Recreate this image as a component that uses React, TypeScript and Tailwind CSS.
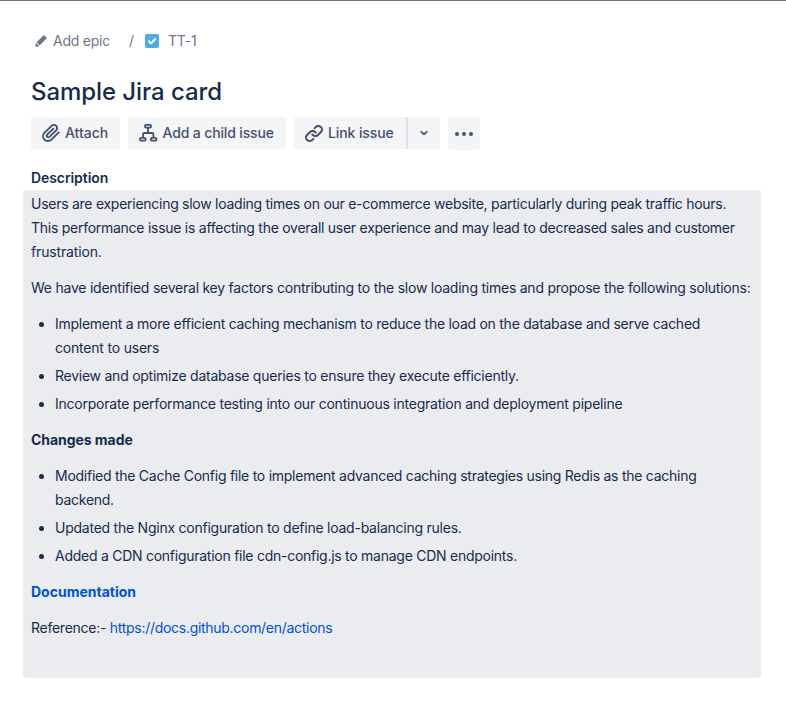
import React from "react";

const AttachIcon = () => (
  <svg width="24" height="24" viewBox="0 0 24 24" className="shrink-0" fill="currentColor">
    <path d="M11.643 17.965c-1.53 1.495-4.016 1.496-5.542.004a3.773 3.773 0 01.002-5.412l7.147-6.985a2.316 2.316 0 013.233-.003c.893.873.895 2.282.004 3.153l-6.703 6.55a.653.653 0 01-.914-.008.62.62 0 010-.902l6.229-6.087a.941.941 0 000-1.353.995.995 0 00-1.384 0l-6.229 6.087a2.502 2.502 0 00-.002 3.607c1.02.997 2.672.997 3.691.001l6.703-6.55c1.664-1.625 1.661-4.234-.004-5.86-1.662-1.625-4.332-1.624-5.993 0l-7.148 6.985a5.636 5.636 0 00-.002 8.116c2.29 2.238 6.014 2.237 8.307-.004l7.431-7.26a.941.941 0 00-.001-1.353.995.995 0 00-1.384 0l-7.43 7.26z" />
  </svg>
);

const ChildIcon = () => (
  <svg width="24" height="24" viewBox="0 0 24 24" className="shrink-0" fill="none" stroke="currentColor" strokeWidth="1.8">
    <rect x="9" y="3.9" width="6" height="2.7" rx="1" />
    <rect x="4" y="16.9" width="5.6" height="2.7" rx="1" />
    <rect x="14.9" y="16.9" width="5.6" height="2.7" rx="1" />
    <path d="M12 6.6v5.4M7 16.9v-3.9a1 1 0 011-1h8.4a1 1 0 011 1v3.9" />
  </svg>
);

const LinkIcon = () => (
  <svg width="24" height="24" viewBox="0 0 24 24" className="shrink-0" fill="currentColor">
    <path d="M12.856 5.457l-.937.92a1.002 1.002 0 000 1.437 1.047 1.047 0 001.463 0l.984-.966c.967-.95 2.542-1.135 3.602-.288a2.54 2.54 0 01.203 3.81l-2.903 2.852a2.646 2.646 0 01-3.696 0l-1.11-1.09L9 13.57l1.108 1.089c1.822 1.788 4.802 1.788 6.622 0l2.905-2.852a4.558 4.558 0 00-.357-6.82c-1.893-1.517-4.695-1.226-6.422.47M11.144 19.543l.937-.92a1.002 1.002 0 000-1.437 1.047 1.047 0 00-1.462 0l-.985.966c-.967.95-2.542 1.135-3.602.288a2.54 2.54 0 01-.203-3.81l2.903-2.852a2.646 2.646 0 013.696 0l1.11 1.09L15 11.43l-1.108-1.089c-1.822-1.788-4.802-1.788-6.622 0l-2.905 2.852a4.558 4.558 0 00.357 6.82c1.893 1.517 4.695 1.226 6.422-.47" />
  </svg>
);

export default function App() {
  return (
    <div className="h-[703px] w-[786px] overflow-hidden whitespace-nowrap border-t border-[#6b778c] bg-white font-['Inter',sans-serif] text-sm text-[#172b4d]">
      <nav className="flex h-6 items-center pl-[33px] mt-7 text-[#6b778c]">
        <svg width="16" height="16" viewBox="0 0 24 24" fill="currentColor" stroke="currentColor" strokeWidth="0.7">
          <path d="M4.02 19.23a1 1 0 0 0 1.18 1.18l3.81-.78-4.21-4.21-.78 3.81zM19.844 6.88l-2.83-2.83c-.195-.195-.45-.293-.706-.293-.256 0-.512.098-.707.293l-9.9 9.9 4.243 4.242 9.9-9.9a1 1 0 0 0 0-1.414z" />
        </svg>
        <span className="ml-1 w-[76px] tracking-[-0.24px]">Add epic</span>
        <span className="w-4">/</span>
        <svg width="14" height="14" viewBox="0 0 14 14">
          <rect width="14" height="14" rx="2" fill="#4bade8" />
          <path d="M4 7.3l2.2 2.1L10.1 5" fill="none" stroke="#fff" strokeWidth="2" strokeLinecap="round" strokeLinejoin="round" />
        </svg>
        <span className="ml-[9px] tracking-[-0.2px]">TT-1</span>
      </nav>
      <h1 className="ml-[31px] mt-[25px] h-[27px] text-2xl leading-7 font-medium tracking-[-0.08px]">Sample Jira card</h1>
      <div className="ml-[31px] mt-3 flex gap-2 font-medium text-[#42526e]">
        <button className="flex h-8 w-[89px] items-center rounded-[3px] bg-[#f4f5f7] pl-2">
          <AttachIcon />
          <span className="ml-[2px]">Attach</span>
        </button>
        <button className="flex h-8 w-[158px] items-center rounded-[3px] bg-[#f4f5f7] pl-2">
          <ChildIcon />
          <span className="ml-[2.5px] tracking-[-0.14px]">Add a child issue</span>
        </button>
        <div className="flex h-8 w-[146px] overflow-hidden rounded-[3px] bg-[#f4f5f7]">
          <button className="flex w-28 items-center pl-2">
            <LinkIcon />
            <span className="ml-[2px] tracking-[-0.1px]">Link issue</span>
          </button>
          <button className="flex flex-1 items-center justify-center border-l-2 border-[#dfe1e6]">
            <svg width="10" height="8" viewBox="0 0 10 8" fill="none" stroke="currentColor" strokeWidth="1.7" strokeLinecap="round" strokeLinejoin="round">
              <path d="M2.2 2.9L5 5.4l2.8-2.5" />
            </svg>
          </button>
        </div>
        <button className="flex h-[33px] w-8 items-center justify-center rounded-[3px] bg-[#f4f5f7]">
          <svg width="20" height="6" viewBox="0 0 20 6" fill="currentColor">
            <circle cx="3" cy="3" r="2" />
            <circle cx="10" cy="3" r="2" />
            <circle cx="17" cy="3" r="2" />
          </svg>
        </button>
      </div>
      <h2 className="ml-[31px] mt-[18px] h-[22px] leading-5 font-semibold tracking-[-0.08px]">Description</h2>
      <section className="ml-[23px] flex h-[488px] w-[738px] flex-col gap-3 rounded-[3px] bg-[#ebecf0] px-2 pt-[2px] leading-6 tracking-[-0.26px]">
        <p>
          <span className="tracking-[-0.268px]">Users are experiencing slow loading times on our e-commerce website, particularly during peak traffic hours.</span>
          <br />
          <span className="tracking-[-0.265px]">This performance issue is affecting the overall user experience and may lead to decreased sales and customer</span>
          <br />
          <span className="tracking-[-0.15px]">frustration.</span>
        </p>
        <p className="tracking-[-0.238px]">We have identified several key factors contributing to the slow loading times and propose the following solutions:</p>
        <ul className="flex list-disc flex-col gap-1 pl-6">
          <li>
            Implement a more efficient caching mechanism to reduce the load on the database and serve cached
            <br />
            <span className="tracking-[-0.2px]">content to users</span>
          </li>
          <li className="tracking-[-0.25px]">Review and optimize database queries to ensure they execute efficiently.</li>
          <li className="tracking-[-0.228px]">Incorporate performance testing into our continuous integration and deployment pipeline</li>
        </ul>
        <p className="font-bold tracking-[-0.05px]">Changes made</p>
        <ul className="flex list-disc flex-col gap-1 pl-6">
          <li>
            Modified the Cache Config file to implement advanced caching strategies using Redis as the caching
            <br />
            backend.
          </li>
          <li className="tracking-[-0.24px]">Updated the Nginx configuration to define load-balancing rules.</li>
          <li>Added a CDN configuration file cdn-config.js to manage CDN endpoints.</li>
        </ul>
        <p className="font-bold tracking-normal text-[#0052cc]">Documentation</p>
        <p>
          Reference:- <a className="tracking-[-0.29px] text-[#0052cc]">https://docs.github.com/en/actions</a>
        </p>
      </section>
    </div>
  );
}
